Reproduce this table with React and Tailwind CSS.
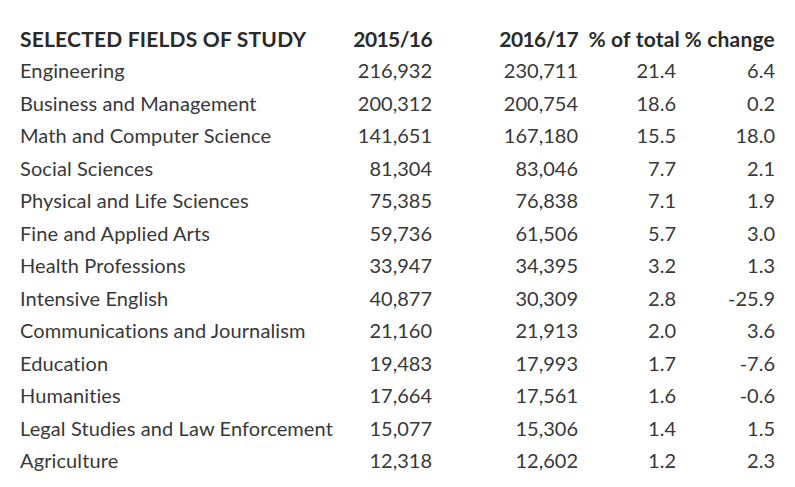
const rows = [
  ['Engineering', '216,932', '230,711', '21.4', '6.4'],
  ['Business and Management', '200,312', '200,754', '18.6', '0.2'],
  ['Math and Computer Science', '141,651', '167,180', '15.5', '18.0'],
  ['Social Sciences', '81,304', '83,046', '7.7', '2.1'],
  ['Physical and Life Sciences', '75,385', '76,838', '7.1', '1.9'],
  ['Fine and Applied Arts', '59,736', '61,506', '5.7', '3.0'],
  ['Health Professions', '33,947', '34,395', '3.2', '1.3'],
  ['Intensive English', '40,877', '30,309', '2.8', '-25.9'],
  ['Communications and Journalism', '21,160', '21,913', '2.0', '3.6'],
  ['Education', '19,483', '17,993', '1.7', '-7.6'],
  ['Humanities', '17,664', '17,561', '1.6', '-0.6'],
  ['Legal Studies and Law Enforcement', '15,077', '15,306', '1.4', '1.5'],
  ['Agriculture', '12,318', '12,602', '1.2', '2.3'],
];

const cols = 'grid grid-cols-[320px_92px_146px_102px_95px] items-center';

export default function App() {
  return (
    <div
      className="w-[795px] h-[487px] bg-white pl-5 pt-[23px] text-[#383838] overflow-hidden"
      style={{ fontFamily: 'Lato, "Open Sans", sans-serif' }}
    >
      {/* header */}
      <div className={`${cols} h-[31px] font-bold text-[21px] text-[#2a2a2a] tracking-[0.2px] whitespace-nowrap`}>
        <div>SELECTED FIELDS OF STUDY</div>
        <div className="text-right tracking-[-0.6px]">2015/16</div>
        <div className="text-right tracking-[-0.6px]">2016/17</div>
        <div className="text-right">% of total</div>
        <div className="text-right">% change</div>
      </div>

      {rows.map((r) => (
        <div key={r[0]} className={`${cols} h-[32.5px] text-[20px]`}>
          <div className="whitespace-nowrap tracking-[0.1px]">{r[0]}</div>
          <div className="text-right">{r[1]}</div>
          <div className="text-right">{r[2]}</div>
          <div className="text-right pr-1">{r[3]}</div>
          <div className="text-right">{r[4]}</div>
        </div>
      ))}
    </div>
  );
}
